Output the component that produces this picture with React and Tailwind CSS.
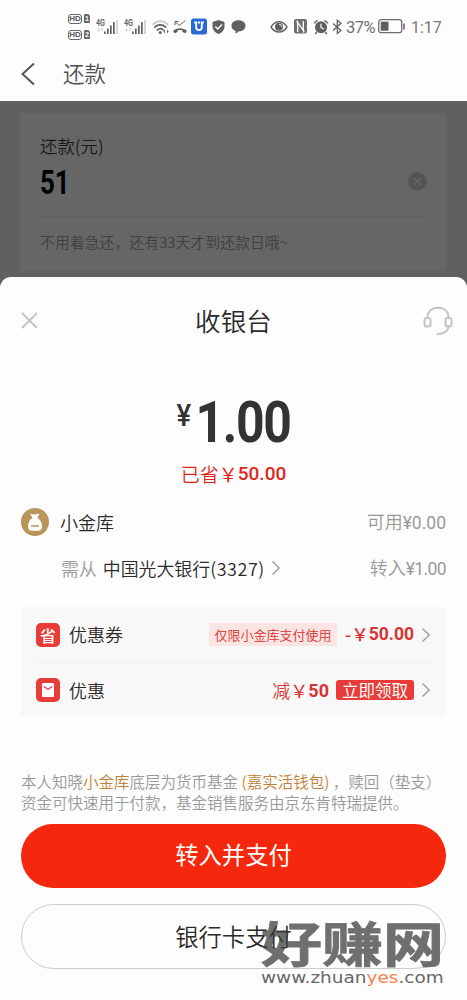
import React from "react";

function HdBadge({ sim }) {
  return (
    <div className="flex items-center gap-[2px]">
      <span className="flex h-[10px] w-[14px] items-center justify-center rounded-[3px] border border-[#666] font-['Liberation_Sans',sans-serif] text-[8px] font-bold leading-none text-[#555]">
        HD
      </span>
      <span className="flex h-[9px] w-[6px] items-center justify-center rounded-[1px] rounded-tr-[3px] bg-[#666] font-['Liberation_Sans',sans-serif] text-[7px] font-bold leading-none text-white">
        {sim}
      </span>
    </div>
  );
}

function Signal() {
  return (
    <svg width="23" height="16" viewBox="0 0 23 16">
      <text x="0" y="6.5" fontSize="9" fontWeight="700" fill="#666" fontFamily="Roboto" textLength="9" lengthAdjust="spacingAndGlyphs">4G</text>
      <path d="M2.5 9v3M1 10.8l1.5 1.5L4 10.8M6 12.5v-3M4.7 10.5L6 9.2l1.3 1.3" stroke="#ccc" strokeWidth=".8" fill="none" />
      <path d="M8 12.5h1.7V15H8zM11 9.5h1.7V15H11zM14 6.5h1.7V15H14zM17 3h1.7v12H17z" fill="#606060" />
      <path d="M20.2 1h1.6v14h-1.6z" fill="#ccc" />
    </svg>
  );
}

function StatusBar() {
  return (
    <div className="flex h-[53px] items-center pl-[68px] text-[#666]">
      <div className="flex w-7 flex-col gap-[6px]">
        <HdBadge sim="1" />
        <HdBadge sim="2" />
      </div>
      <Signal />
      <div className="ml-[5px]">
        <Signal />
      </div>
      {/* wifi */}
      <svg className="ml-[5px]" width="18" height="16" viewBox="0 0 18 16" fill="none" strokeLinecap="round">
        <path d="M1 5.3c4-4.2 10.5-4.2 14.5 0" stroke="#ccc" strokeWidth="1.7" />
        <path d="M2.8 8.2c3.2-3 7.7-3 10.9 0M5.3 11c2-1.8 4-1.8 5.8-.2" stroke="#606060" strokeWidth="1.7" />
        <circle cx="8.2" cy="13.5" r="1.5" fill="#606060" />
        <path d="M13 10.5l-1.7 2 1.7 2zM15 10.5l1.7 2-1.7 2z" fill="#606060" />
      </svg>
      {/* missed call */}
      <svg className="ml-[2px]" width="16" height="16" viewBox="0 0 16 16">
        <path d="M1 12C4.5 8.3 11.5 8.3 15 12l-1.6 2.2-3-1.2v-1.5c-1.7-.6-3.1-.6-4.8 0V13l-3 1.2z" fill="#606060" />
        <path d="M3 6V2.5h3.5M3.2 2.7l4 3.8 6-4.8" fill="none" stroke="#606060" strokeWidth="1" />
      </svg>
      {/* blue app tile */}
      <svg className="ml-[3px]" width="16" height="17" viewBox="0 0 16 17">
        <rect y=".5" width="16" height="16" rx="2.5" fill="#2a69dc" />
        <path d="M3.3 4.5h3M9.7 4.5h3M5.2 4.5v4.8a2.8 2.8 0 0 0 5.6 0V4.5M7 4.5h2" fill="none" stroke="#fff" strokeWidth="1.9" />
      </svg>
      {/* shield */}
      <svg className="ml-[5px]" width="13" height="16" viewBox="0 0 13 16">
        <path d="M6.5 1l6 2v4.5c0 3.5-2.5 6-6 7.5-3.5-1.5-6-4-6-7.5V3z" fill="#606060" />
        <path d="M3.3 7.5l2.5 2.5 4.2-4.5" fill="none" stroke="#fff" strokeWidth="1.4" />
      </svg>
      <svg className="ml-[6px]" width="15" height="15" viewBox="0 0 15 15">
        <path d="M7.5 1.2c4 0 7 2.3 7 5.5s-3 5.6-6.800 5.600c-.5 1-1.800 1.900-3.700 2 .7-.8.8-1.600.6-2.400C2.200 11.100.5 9.200.5 6.700c0-3.200 3-5.500 7-5.500z" fill="#606060" />
      </svg>
      {/* eye comfort */}
      <svg className="ml-6" width="18" height="14" viewBox="0 0 18 14">
        <path d="M1 7c4-7 12-7 16 0-4 6.5-12 6.5-16 0z" fill="none" stroke="#666" strokeWidth="1.5" />
        <circle cx="9" cy="6.8" r="4" fill="#606060" />
        <path d="M9 4.2a2.5 2.5 0 0 1 2.5 2.3" stroke="#fff" strokeWidth="1" fill="none" />
      </svg>
      {/* nfc */}
      <svg className="ml-[6px]" width="13" height="15" viewBox="0 0 13 15">
        <rect width="13" height="14.5" rx="2" fill="#707070" />
        <path d="M3.7 13V3.5l5.6 8V2M2.7 3.5l1-2M10.3 11.500l-1 2" fill="none" stroke="#fff" strokeWidth="1.3" />
      </svg>
      {/* alarm */}
      <svg className="ml-[6px]" width="16" height="16" viewBox="0 0 16 16">
        <circle cx="8" cy="8.3" r="6" fill="#606060" />
        <path d="M1 4.3L4.5 1.2M15 4.3l-3.5-3.1M3.8 13l-1.5 2M12.2 13l1.5 2" stroke="#666" strokeWidth="1.5" />
        <path d="M8 4.8V8.5l2.7 1.6" stroke="#fff" strokeWidth="1.2" fill="none" />
      </svg>
      <svg className="ml-[3px]" width="11" height="16" viewBox="0 0 11 16">
        <path d="M1 4.5l8 7-3.7 3V1.3l3.7 3-8 7.2" fill="none" stroke="#606060" strokeWidth="1.3" />
      </svg>
      <span className="ml-[3px] w-[31px] whitespace-nowrap pt-[3px] font-[Roboto,sans-serif] text-[16.5px] tracking-[-0.5px] text-[#707070]">37%</span>
      <svg className="ml-[1px]" width="28" height="15" viewBox="0 0 28 15">
        <rect x=".7" y=".7" width="23" height="13" rx="2.5" fill="none" stroke="#707070" strokeWidth="1.3" />
        <rect x="2.7" y="2.7" width="7.8" height="9" fill="#606060" />
        <path d="M26 4.5v6" stroke="#707070" strokeWidth="1.7" />
      </svg>
      <span className="ml-[5px] pt-[3px] font-[Roboto,sans-serif] text-[16px] text-[#777]">1:17</span>
    </div>
  );
}

function Chevron() {
  return (
    <svg width="10" height="16" viewBox="0 0 10 16" fill="none" stroke="#999" strokeWidth="1.3">
      <path d="M1.5 1.5L8.2 8l-6.7 6.5" />
    </svg>
  );
}

function RepayCard() {
  return (
    <div className="mx-5 mt-3 h-[158px] bg-[#666] px-5 pt-[21px]">
      <div className="text-[17.4px] font-[350] leading-6 text-[#1a1a1a]">还款(元)</div>
      <div className="flex h-[47px] items-center justify-between">
        <span className="origin-left scale-x-[.76] font-[Roboto,sans-serif] text-[34px] font-bold leading-none text-black">51</span>
        <svg width="19" height="19" viewBox="0 0 19 19">
          <circle cx="9.5" cy="9.5" r="9.3" fill="#545454" />
          <path d="M6 6l7 7M13 6l-7 7" stroke="#666" strokeWidth="1.2" />
        </svg>
      </div>
      <div className="mt-[11px] border-t border-[#606060] pt-[14px] text-[14.9px] font-[350] leading-[22px] text-[#404040]">
        不用着急还，还有33天才到还款日哦~
      </div>
    </div>
  );
}

function Watermark() {
  return (
    <div className="pointer-events-none absolute left-[261px] top-[918px] w-[190px] select-none">
      <div className="h-[51px] opacity-75">
        <div className="origin-top-left scale-y-[.78] whitespace-nowrap text-[61px] font-bold leading-[59px] text-[#404040] [-webkit-text-stroke:1px_#404040]">
          好赚网
        </div>
      </div>
      <div className="origin-left scale-x-[1.23] whitespace-nowrap font-['DejaVu_Sans',sans-serif] text-[15px] leading-[18px] text-[#666]">
        www.zhuan<span className="text-[#ff7f50]">yes</span>.com
      </div>
    </div>
  );
}

export default function App() {
  return (
    <div className="relative h-[1000px] w-[467px] overflow-hidden bg-[#606060] font-['Noto_Sans_CJK_SC',sans-serif] text-[#333]">
      <header className="h-[101px] bg-[#fdfdfd]">
        <StatusBar />
        <div className="flex h-[41px] items-center pl-5">
          <svg width="16" height="24" viewBox="0 0 16 24" fill="none" stroke="#555" strokeWidth="2">
            <path d="M14 1.5L2.5 12 14 22.5" />
          </svg>
          <h1 className="ml-[27px] text-[21.5px] font-[350] text-[#505050]">还款</h1>
        </div>
      </header>

      <RepayCard />

      <section className="mt-[6px] h-[723px] rounded-t-[11px] bg-[#fdfdfd] px-[21px]">
        <div className="flex h-[87px] items-center justify-between">
          <svg width="18" height="18" viewBox="0 0 18 18" stroke="#c4c4c4" strokeWidth="2">
            <path d="M1 1l15 15M16 1L1 16" />
          </svg>
          <h2 className="ml-[5px] text-[25.5px] font-[350] tracking-[0.2px] text-[#2a2a2a]">收银台</h2>
          <svg className="-mr-[7px]" width="30" height="30" viewBox="0 0 30 30" fill="none" stroke="#c4c4c4" strokeWidth="2">
            <path d="M4.500 12C4.500 5 9 1.800 15 1.800S25.500 5 25.500 12M25.500 20c0 5-4.500 8-11 8" strokeLinecap="round" />
            <rect x="1.5" y="12" width="6" height="8.5" rx="2" />
            <rect x="22.5" y="12" width="6" height="8.5" rx="2" />
          </svg>
        </div>

        <div className="mt-[22px] flex h-[72px] origin-center scale-x-[.86] items-center justify-center font-[Roboto,sans-serif] font-bold">
          <span className="mb-[15px] mr-[5px] text-[32px] font-medium leading-none">¥</span>
          <span className="text-[58px] leading-none tracking-[-1.5px]">1.00</span>
        </div>
        <div className="flex h-8 items-center justify-center text-[19px] font-[350] text-[#e1251b]">
          已省<span className="font-normal">￥</span>
          <span className="font-[Roboto,sans-serif] font-medium">50.00</span>
        </div>

        <div className="mt-[9px] flex h-[46px] items-center">
          <svg width="28" height="28" viewBox="0 0 28 28">
            <circle cx="14" cy="14" r="14" fill="#b7955b" />
            <path d="M9 5.800c1.700-.5 2.800.7 4 .8 1.300 0 3-1.500 5.500-.5l-2.300 3.700c3.500 2 4.800 5 4.800 8.500 0 3-1.500 4.500-4 4.500h-6c-2.500 0-4-1.500-4-4.500 0-3.500 1.500-6.500 4.500-8.500z" fill="#fff" />
            <path d="M10 18h8" stroke="#b7955b" strokeWidth="1.5" />
          </svg>
          <span className="ml-[11px] text-[18px] font-[350] text-[#2a2a2a]">小金库</span>
          <span className="ml-auto text-[18px] font-[350] text-[#999]">
            可用<span className="font-[Roboto,sans-serif] text-[17.5px] font-normal">¥0.00</span>
          </span>
        </div>
        <div className="flex h-[46px] items-center pl-10 text-[17.9px] font-[350]">
          <span className="mr-[6px] text-[#999]">需从</span>
          <span className="mr-[6px] text-[#2a2a2a]">
            中国光大银行<span className="tracking-[0.6px]">(3327)</span>
          </span>
          <Chevron />
          <span className="ml-auto text-[18px] text-[#999]">
            转入<span className="font-[Roboto,sans-serif] text-[17.5px] font-normal tracking-[-0.6px]">¥1.00</span>
          </span>
        </div>

        <div className="mt-4 h-[110px] bg-[#f8f8f8] px-[15px]">
          <div className="flex h-[56px] items-center border-b border-[#f0f0f0]">
            <span className="flex h-6 w-6 items-center justify-center rounded-[5px] bg-[#e93b37] text-[16px] font-medium leading-none text-white">省</span>
            <span className="ml-[9px] text-[18px] font-[350] text-[#2a2a2a]">优惠券</span>
            <span className="ml-auto flex h-[23px] w-[128px] items-center justify-center bg-[#fce4e3] text-[13px] font-[350] text-[#d8312b]">仅限小金库支付使用</span>
            <span className="ml-2 mr-[7px] flex whitespace-nowrap text-[17.5px] font-medium text-[#d83434]">
              -￥<span className="font-[Roboto,sans-serif] font-bold">50.00</span>
            </span>
            <Chevron />
          </div>
          <div className="flex h-[54px] items-center">
            <span className="flex h-6 w-6 items-center justify-center rounded-[5px] bg-[#e93b37]">
              <svg width="12" height="14" viewBox="0 0 12 14">
                <rect width="12" height="14" rx="1" fill="#fff" />
                <path d="M2 3.500l4 3 4-3" fill="none" stroke="#e93b37" strokeWidth="1.2" />
              </svg>
            </span>
            <span className="ml-[9px] text-[18px] font-[350] text-[#2a2a2a]">优惠</span>
            <span className="ml-auto flex text-[18px] font-[350] text-[#d83434]">
              减<span className="font-normal">￥</span>
              <span className="font-[Roboto,sans-serif] font-bold">50</span>
            </span>
            <span className="ml-[7px] mr-[7px] flex h-5 w-[78px] items-center justify-center rounded-[3px] bg-[#e93b37] text-[16.5px] leading-none text-white">立即领取</span>
            <Chevron />
          </div>
        </div>

        <p className="mt-[54px] whitespace-nowrap text-[15.5px] font-[350] leading-[21px] text-[#999]">
          本人知晓<span className="text-[#bf8238]">小金库</span>底层为货币基金<span className="text-[#bf8238]"> (嘉实活钱包)</span> ，赎回（垫支）
          <br />
          资金可快速用于付款，基金销售服务由京东肯特瑞提供。
        </p>

        <button className="mt-[11px] block h-16 w-full rounded-full bg-[#f5270d] pb-[3px] text-[23.3px] text-white">转入并支付</button>
        <button className="mt-4 block h-[65px] w-full rounded-full border border-[#ccc] bg-[#fdfdfd] text-[23.3px] font-[350] text-[#2a2a2a]">银行卡支付</button>
      </section>

      <Watermark />
    </div>
  );
}
